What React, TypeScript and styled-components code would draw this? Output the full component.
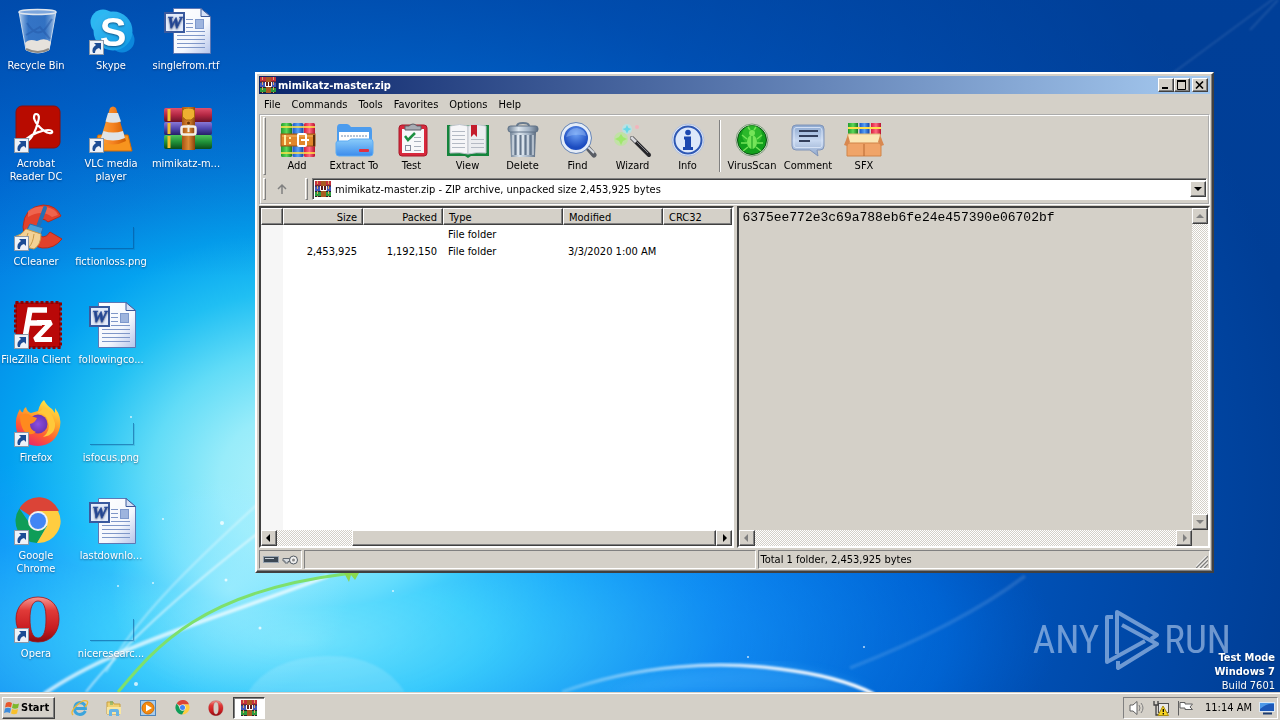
import React from 'react';
import styled, { createGlobalStyle, css } from 'styled-components';

const uiFont = '"DejaVu Sans Condensed", "Noto Sans", sans-serif';
const face = '#d4d0c8';
const shade = '#808080';
const dark = '#404040';

const GlobalStyle = createGlobalStyle`
  * { box-sizing: border-box; }
  body { margin: 0; background: #0050b4; overflow: hidden; }
  body, button, select, textarea, table {
    font-family: ${uiFont};
    font-size: 11px;
    line-height: 13px;
    color: #000;
  }
  button { margin: 0; padding: 0; border: 0; background: none; }
  svg { display: block; flex: none; }
`;

const raised = css`
  background: ${face};
  border: 1px solid;
  border-color: #fff ${dark} ${dark} #fff;
  box-shadow: inset -1px -1px 0 ${shade};
`;

const sunken = css`
  border: 1px solid;
  border-color: ${shade} #fff #fff ${shade};
`;

/* ---------- page ---------- */

const Screen = styled.div`
  display: flex;
  flex-direction: column;
  height: 100vh;
`;

const Desktop = styled.main`
  position: relative;
  flex: 1;
  min-height: 0;
  overflow: hidden;
`;

const WallpaperArt = styled.svg`
  position: absolute;
  inset: 0;
  width: 100%;
  height: 100%;
`;

const LightPool = styled.ellipse`
  mix-blend-mode: lighten;
`;

const IconGrid = styled.div`
  position: relative;
  display: grid;
  grid-auto-flow: column;
  grid-template-rows: repeat(7, 98px);
  grid-auto-columns: 75px;
  justify-content: start;
`;

const DesktopItem = styled.button`
  display: flex;
  flex-direction: column;
  align-items: center;
  gap: 4px;
  padding-top: 7px;
  color: #fff;
  text-shadow: 0 1px 2px rgba(0, 20, 60, 0.55);
`;

const IconSlot = styled.span`
  position: relative;
  display: block;
  width: 48px;
  height: 48px;
`;

const ShortcutMark = styled.svg`
  position: absolute;
  left: 0;
  bottom: 0;
`;

const ItemLabel = styled.span`
  white-space: pre;
  text-align: center;
  padding-right: 3px;
`;

/* ---------- archive window ---------- */

const Window = styled.section`
  position: absolute;
  left: 255px;
  right: 66px;
  top: 72px;
  bottom: 119px;
  display: flex;
  flex-direction: column;
  padding: 2px;
  background: ${face};
  border: 2px solid;
  border-color: #fff ${dark} ${dark} #fff;
  box-shadow: inset -1px -1px 0 ${shade};
`;

const TitleBar = styled.header`
  display: flex;
  align-items: center;
  height: 18px;
  padding: 0 2px 0 1px;
  gap: 2px;
  color: #fff;
  background: linear-gradient(90deg, #0a246a, #a6caf0);
`;

const Title = styled.h1`
  flex: 1;
  margin: 0;
  font-size: 11px;
  line-height: 13px;
  font-weight: bold;
`;

const CaptionGroup = styled.div`
  display: flex;
`;

const CaptionButton = styled.button`
  ${raised}
  display: flex;
  align-items: center;
  justify-content: center;
  width: 16px;
  height: 14px;
`;

const MenuBar = styled.nav`
  display: flex;
  align-items: center;
  gap: 11px;
  height: 20px;
  padding: 0 5px;
`;

const ToolArea = styled.div`
  border: 2px groove #fff;
  padding: 1px 0 1px 2px;
  height: 91px;
  display: flex;
  flex-direction: column;
  gap: 3px;
`;

const Row = styled.div`
  display: flex;
  align-items: center;
`;

const Gripper = styled.span`
  align-self: stretch;
  width: 3px;
  border: 1px solid;
  border-color: #fff ${shade} ${shade} #fff;
`;

const ToolButtons = styled.div`
  display: grid;
  grid-template-columns: 56px 58px 57px repeat(5, 55px) 9px repeat(3, 56px);
  padding-left: 3px;
`;

const ToolButton = styled.button`
  display: flex;
  flex-direction: column;
  align-items: center;
  gap: 1px;
  padding: 5px 0 3px;
  white-space: nowrap;
`;

const ToolSeparator = styled.span`
  justify-self: center;
  width: 2px;
  border-left: 1px solid ${shade};
  border-right: 1px solid #fff;
  margin: 3px 0;
`;

const UpButton = styled.button`
  display: flex;
  align-items: center;
  justify-content: center;
  width: 36px;
  height: 22px;
  padding-right: 4px;
  margin-right: 3px;
`;

const AddressBox = styled.div`
  flex: 1;
  display: flex;
  align-items: center;
  height: 22px;
  margin: 0 1px 0 4px;
  padding-left: 2px;
  gap: 4px;
  background: #fff;
  border: 1px solid;
  border-color: ${shade} #fff #fff ${shade};
  box-shadow: inset 1px 1px 0 ${dark};
`;

const AddressSelect = styled.select`
  flex: 1;
  appearance: none;
  border: 0;
  padding: 1px 0 0;
  background: #fff;
  outline: none;
`;

const Panels = styled.div`
  flex: 1;
  min-height: 0;
  display: grid;
  grid-template-columns: 476fr 473fr;
  gap: 3px;
  padding: 1px 0 2px;
`;

const Panel = styled.div`
  display: flex;
  flex-direction: column;
  min-width: 0;
  border: 2px solid;
  border-color: ${dark} #fff #fff ${dark};
`;

const ListArea = styled.div`
  flex: 1;
  background: linear-gradient(90deg, #f6f6f6 22px, #fff 22px);
`;

const FileTable = styled.table`
  width: 100%;
  table-layout: fixed;
  border-collapse: separate;
  border-spacing: 0;
`;

const Column = styled.col<{ $width?: string }>`
  width: ${(p) => p.$width ?? 'auto'};
`;

const HeadCell = styled.th<{ $right?: boolean }>`
  ${raised}
  height: 17px;
  padding: 1px 5px 0;
  font-weight: normal;
  text-align: ${(p) => (p.$right ? 'right' : 'left')};
`;

const Cell = styled.td<{ $right?: boolean }>`
  height: 17px;
  padding: 3px 6px 1px 5px;
  white-space: nowrap;
  text-align: ${(p) => (p.$right ? 'right' : 'left')};
`;

const CommentBody = styled.div`
  flex: 1;
  display: flex;
  min-height: 0;
`;

const CommentText = styled.textarea`
  flex: 1;
  resize: none;
  border: 0;
  outline: none;
  padding: 1px 3px;
  background: ${face};
  font-family: "Liberation Mono", monospace;
  font-size: 13px;
  line-height: 17px;
  overflow: hidden;
`;

const ScrollTrack = styled.div<{ $vertical?: boolean }>`
  display: flex;
  flex-direction: ${(p) => (p.$vertical ? 'column' : 'row')};
  justify-content: space-between;
  flex: ${(p) => (p.$vertical ? 'none' : '1')};
  width: ${(p) => (p.$vertical ? '16px' : 'auto')};
  background: repeating-conic-gradient(#fff 0 25%, ${face} 0 50%) 0 0 / 2px 2px;
`;

const ScrollRow = styled.div`
  display: flex;
  height: 16px;
`;

const ScrollCorner = styled.span`
  width: 16px;
  background: ${face};
`;

const ScrollButton = styled.button`
  ${raised}
  display: flex;
  align-items: center;
  justify-content: center;
  width: 16px;
  height: 16px;
`;

const ScrollThumb = styled.div`
  ${raised}
  flex: 1;
  margin-left: 16%;
`;

const StatusBar = styled.footer`
  display: grid;
  grid-template-columns: 43px 454fr 453fr;
  gap: 2px;
  height: 19px;
`;

const StatusPane = styled.div`
  ${sunken}
  display: flex;
  align-items: center;
  gap: 2px;
  padding: 0 1px;
`;

const SizeGrip = styled.svg`
  margin-left: auto;
  align-self: end;
`;

/* ---------- watermark ---------- */

const Brand = styled.div`
  position: absolute;
  right: 49px;
  bottom: 20px;
  display: flex;
  align-items: center;
  gap: 4px;
  opacity: 0.6;
  color: #b8d0f0;
  font-family: "Roboto Condensed", "Liberation Sans Narrow", "DejaVu Sans Condensed", sans-serif;
  font-size: 39px;
  line-height: 64px;
  font-weight: 400;
`;

const BuildInfo = styled.div`
  position: absolute;
  right: 5px;
  bottom: 0;
  display: grid;
  gap: 1px;
  color: #fff;
  text-align: right;
  text-shadow: 0 1px 1px rgba(0, 0, 0, 0.4);
`;

const BuildLine = styled.span<{ $bold?: boolean }>`
  font-weight: ${(p) => (p.$bold ? 'bold' : 'normal')};
`;

/* ---------- taskbar ---------- */

const Taskbar = styled.footer`
  display: flex;
  align-items: center;
  height: 28px;
  padding: 2px 2px 0;
  background: ${face};
  border-top: 1px solid ${face};
  box-shadow: inset 0 1px 0 #fff;
`;

const StartButton = styled.button`
  ${raised}
  display: flex;
  align-items: center;
  gap: 1px;
  height: 22px;
  width: 53px;
  padding-left: 1px;
  font-weight: bold;
`;

const QuickLaunch = styled.div`
  display: flex;
  flex: 1;
  padding-left: 8px;
`;

const QuickButton = styled.button<{ $active?: boolean }>`
  display: flex;
  align-items: center;
  justify-content: center;
  width: 34px;
  height: 22px;
  ${(p) =>
    p.$active &&
    css`
      width: 32px;
      background: #fff;
      border: 1px solid;
      border-color: ${dark} #fff #fff ${dark};
      box-shadow: inset 1px 1px 0 ${shade};
    `}
`;

const Tray = styled.div`
  ${sunken}
  display: flex;
  align-items: center;
  gap: 7px;
  height: 22px;
  padding: 0 2px 0 4px;
`;

const Clock = styled.time`
  margin-left: 4px;
  white-space: nowrap;
`;

/* ---------- drawings ---------- */

function Wallpaper() {
  return (
    <WallpaperArt viewBox="0 0 1280 692" preserveAspectRatio="none" aria-hidden="true">
      <defs>
        <radialGradient id="sky" gradientUnits="userSpaceOnUse" cx="0" cy="0" r="1000" gradientTransform="translate(300 480) scale(1 .86)">
          <stop offset="0" stopColor="#b4f3fc" />
          <stop offset=".08" stopColor="#98ecfa" />
          <stop offset=".15" stopColor="#62dcf7" />
          <stop offset=".22" stopColor="#20bff3" />
          <stop offset=".29" stopColor="#04a2f0" />
          <stop offset=".37" stopColor="#0488e6" />
          <stop offset=".47" stopColor="#0070dc" />
          <stop offset=".62" stopColor="#005ac4" />
          <stop offset=".8" stopColor="#004cae" />
          <stop offset="1" stopColor="#003e96" />
        </radialGradient>
        <linearGradient id="topShade" x1="0" y1="0" x2="0" y2="1">
          <stop offset="0" stopColor="#00409a" stopOpacity=".55" />
          <stop offset=".4" stopColor="#00409a" stopOpacity="0" />
        </linearGradient>
        <radialGradient id="glow">
          <stop offset="0" stopColor="#c8f8ff" stopOpacity=".5" />
          <stop offset="1" stopColor="#b0f0ff" stopOpacity="0" />
        </radialGradient>
        <radialGradient id="lowGlow">
          <stop offset="0" stopColor="#80e8ff" stopOpacity=".8" />
          <stop offset=".25" stopColor="#48d4ff" stopOpacity=".75" />
          <stop offset=".55" stopColor="#1c9cff" stopOpacity=".6" />
          <stop offset=".85" stopColor="#0078f0" stopOpacity=".4" />
          <stop offset="1" stopColor="#0068e0" stopOpacity="0" />
        </radialGradient>
        <linearGradient id="arc" x1="0" y1="0" x2="1" y2="0">
          <stop offset="0" stopColor="#fff" stopOpacity=".2" />
          <stop offset=".6" stopColor="#fff" stopOpacity=".8" />
          <stop offset="1" stopColor="#fff" />
        </linearGradient>
        <filter id="soft"><feGaussianBlur stdDeviation="1.2" /></filter>
        <filter id="softer"><feGaussianBlur stdDeviation="6" /></filter>
      </defs>
      <rect width="1280" height="692" fill="url(#sky)" />
      <rect width="1280" height="692" fill="url(#topShade)" />
      <LightPool cx="300" cy="640" rx="760" ry="250" fill="url(#lowGlow)" />
      <ellipse cx="230" cy="590" rx="120" ry="110" fill="url(#glow)" />
      <g fill="none" stroke="#fff" filter="url(#soft)">
        <path d="M44 694C90 662 150 640 200 622Q280 594 328 576" strokeWidth="4" opacity=".7" />
        <path d="M86 692C115 655 165 605 262 530" strokeWidth="2" opacity=".6" />
        <path d="M106 672C135 620 185 570 262 500" strokeWidth="2" opacity=".4" />
        <path d="M1250 30L1278 0M1150 90L1280 -6" strokeWidth="2" opacity=".1" />
        <path d="M850 668Q960 625 1025 576" strokeWidth="4" opacity=".12" />
      </g>
      <path d="M248 692Q270 658 325 656T405 692" fill="#fff" opacity=".14" filter="url(#soft)" />
      <path d="M600 692Q720 655 790 668Q850 680 870 692Z" fill="#4bb8ff" opacity=".35" filter="url(#softer)" />
      <path d="M562 692C640 664 720 661 780 669Q838 676 874 694" fill="none" stroke="url(#arc)" strokeWidth="3.500" filter="url(#soft)" />
      <path d="M118 692C155 648 200 592 345 574" fill="none" stroke="#7ee06c" strokeWidth="3" />
      <path d="M344 573l5 9 2-7 4 5 4-7z" fill="#8ad84e" />
      <g fill="#fff" opacity=".75">
        <circle cx="222" cy="523" r="2" /><circle cx="226" cy="580" r="1.500" /><circle cx="136" cy="684" r="2" />
        <circle cx="163" cy="519" r="1" /><circle cx="118" cy="586" r="1" /><circle cx="260" cy="628" r="1.500" />
        <circle cx="153" cy="583" r="1" /><circle cx="131" cy="417" r="1" /><circle cx="393" cy="591" r="1" />
        <circle cx="864" cy="647" r="1" /><circle cx="748" cy="657" r="1" />
      </g>
    </WallpaperArt>
  );
}

function RecycleBin() {
  return (
    <svg width="48" height="48" viewBox="0 0 48 48">
      <defs>
        <linearGradient id="binGlass" x1="0" x2="1">
          <stop offset="0" stopColor="#dcecfb" stopOpacity=".85" />
          <stop offset=".25" stopColor="#5f93d6" stopOpacity=".55" />
          <stop offset=".7" stopColor="#5b8ed0" stopOpacity=".55" />
          <stop offset="1" stopColor="#cfe2f6" stopOpacity=".85" />
        </linearGradient>
      </defs>
      <path d="M5 5L12 43Q24 49 35 43L42 5Z" fill="url(#binGlass)" stroke="#c5d8ec" strokeWidth="1" />
      <path d="M13 16Q24 34 34 18L38 12M12 28l14-8 10 12" stroke="#2458a8" strokeWidth="2" fill="none" opacity=".5" />
      <path d="M11 36Q15 31 23 34Q31 30 37 35L35 43Q24 48 12 43Z" fill="#e6e2dc" />
      <path d="M12 42Q24 48 35 42" stroke="#8d8a84" fill="none" strokeWidth="2" />
      <ellipse cx="23.500" cy="5" rx="18.500" ry="2.500" fill="#7da6dc" stroke="#dfe6ee" strokeWidth="1.500" />
    </svg>
  );
}

function Skype() {
  return (
    <svg width="48" height="48" viewBox="0 0 48 48">
      <defs>
        <linearGradient id="skypeBlue" x1="0" y1="0" x2="1" y2="1">
          <stop offset="0" stopColor="#38bdf4" /><stop offset="1" stopColor="#129ae4" />
        </linearGradient>
      </defs>
      <circle cx="14" cy="15" r="12.500" fill="#2cb8f2" />
      <circle cx="33" cy="33" r="12.500" fill="#0c88dc" />
      <circle cx="24" cy="24" r="19.500" fill="url(#skypeBlue)" />
      <text x="24" y="39" textAnchor="middle" fontFamily="Liberation Sans" fontWeight="bold" fontSize="40" fill="#fff">S</text>
    </svg>
  );
}

function WordDoc() {
  return (
    <svg width="48" height="48" viewBox="0 0 48 48">
      <defs>
        <linearGradient id="paper" x1="0" y1="0" x2="1" y2="1">
          <stop offset="0" stopColor="#fff" /><stop offset=".6" stopColor="#f4f7fd" /><stop offset="1" stopColor="#b4c4ea" />
        </linearGradient>
      </defs>
      <path d="M9.500 1.500H37L46.500 9.500V46.500H9.500Z" fill="url(#paper)" stroke="#5e78b4" />
      <path d="M37 1.500V9.500H46.500Z" fill="#d5e0f5" stroke="#3d5a9c" />
      <rect x="31.500" y="12.500" width="8" height="9" fill="#9db4de" stroke="#7d98cc" />
      <path d="M22 12.500h7M22 16.500h7M22 20.500h7M22 24.500h19M13 28.500h28M13 32.500h28M13 36.500h28M13 40.500h28" stroke="#7f97c8" />
      <rect x="1" y="6" width="19" height="19" fill="#e3ebfa" stroke="#3a5a9e" strokeWidth="2" />
      <text x="10.500" y="21" textAnchor="middle" fontFamily="Liberation Serif" fontWeight="bold" fontStyle="italic" fontSize="17" fill="#2c4f9e" stroke="#2c4f9e" strokeWidth=".6">W</text>
    </svg>
  );
}

function Acrobat() {
  return (
    <svg width="48" height="48" viewBox="0 0 48 48">
      <rect x="2" y="1" width="44" height="42" rx="6" fill="#b80b00" stroke="#8a0f0c" />
      <path d="M22 9C26 9 25 14 24 17C22 25 18 33 13 37C11 39 8 37 12 34C18 29 28 25 34 25C40 25 39 29 35 28C29 27 21 18 20 13C20 11 20 9 22 9Z" fill="none" stroke="#fff" strokeWidth="2.200" strokeLinejoin="round" />
    </svg>
  );
}

function Vlc() {
  return (
    <svg width="48" height="48" viewBox="0 0 48 48">
      <defs>
        <linearGradient id="cone" x1="0" x2="1">
          <stop offset="0" stopColor="#f9a13a" /><stop offset=".5" stopColor="#f58220" /><stop offset="1" stopColor="#cf5c00" />
        </linearGradient>
      </defs>
      <path d="M9 30H39L43 46H4Z" fill="#f7941e" stroke="#d06a06" />
      <path d="M21 3Q24 0 27 3L37 36Q24 43 11 36Z" fill="url(#cone)" />
      <path d="M19 8H29L32 16.500Q24 19 16.500 16.500Z" fill="#dfe3e6" />
      <path d="M14.500 26Q24 29 34 26L36 33Q24 38 12 33Z" fill="#dfe3e6" />
    </svg>
  );
}

function RarBooks({ size = 48 }: { size?: number }) {
  return (
    <svg width={size} height={size} viewBox="0 0 48 48">
      <defs>
        <linearGradient id="bookRed" x1="0" y1="0" x2="0" y2="1"><stop offset="0" stopColor="#e0506c" /><stop offset=".5" stopColor="#b32743" /><stop offset="1" stopColor="#6a1228" /></linearGradient>
        <linearGradient id="bookBlue" x1="0" y1="0" x2="0" y2="1"><stop offset="0" stopColor="#8a78d6" /><stop offset=".5" stopColor="#5247ae" /><stop offset="1" stopColor="#251f66" /></linearGradient>
        <linearGradient id="bookGreen" x1="0" y1="0" x2="0" y2="1"><stop offset="0" stopColor="#4fc45c" /><stop offset=".5" stopColor="#1f9038" /><stop offset="1" stopColor="#0b4d1a" /></linearGradient>
        <linearGradient id="belt" x1="0" x2="1"><stop offset="0" stopColor="#a85413" /><stop offset=".5" stopColor="#dc8a35" /><stop offset="1" stopColor="#8c420c" /></linearGradient>
      </defs>
      <rect x="0" y="3" width="48" height="14" rx="2" fill="url(#bookRed)" />
      <rect x="0" y="17" width="48" height="13" rx="2" fill="url(#bookBlue)" />
      <rect x="0" y="30" width="48" height="14" rx="2" fill="url(#bookGreen)" />
      <path d="M5 4v12M5 18v11M5 31v12" stroke="#f2c230" strokeWidth="3" />
      <rect x="18" y="2" width="13" height="43" fill="url(#belt)" />
      <path d="M18.500 12V6Q19 3 24.500 3T30.500 6V12L27 15H22Z" fill="#eeb030" stroke="#a8670c" />
      <circle cx="24.500" cy="18" r="1.500" fill="#6a3208" />
      <rect x="17.500" y="21.500" width="14" height="8" rx="2" fill="none" stroke="#f3efe6" strokeWidth="2.500" />
      <path d="M24.500 20v7" stroke="#f3efe6" strokeWidth="2" />
    </svg>
  );
}

function RarSmall() {
  return (
    <svg width="16" height="16" viewBox="0 0 16 16">
      <rect width="16" height="5" fill="#c4303c" /><rect y="5" width="16" height="6" fill="#4256b8" /><rect y="11" width="16" height="5" fill="#2c9a3c" />
      <path d="M0 5h16M0 10.500h16M0 15.500h16" stroke="#26202c" />
      <path d="M2.500 0v16M13.500 0v16" stroke="#e0a860" strokeDasharray="3 2" />
      <rect x="6" width="5" height="16" fill="#a85a22" />
      <rect x="5" y="5" width="7" height="5" fill="#5a1c20" /><path d="M5.500 5v4.500h6V5M8.500 5v4" stroke="#fff" fill="none" />
    </svg>
  );
}

function CCleaner() {
  return (
    <svg width="48" height="48" viewBox="0 0 48 48">
      <path d="M47 13L34 19Q28 13 24 20Q20 32 29 34Q33 34 36 29L48 36Q40 46 28 45Q10 42 9 24Q10 4 29 2Q42 2 47 13Z" fill="#e2412b" stroke="#b52c1c" />
      <path d="M14 8Q22 2 32 4Q42 6 44 12L38 14Q28 6 14 14Z" fill="#f5745c" opacity=".7" />
      <path d="M31 5L24 24" stroke="#2670b4" strokeWidth="4" strokeLinecap="round" />
      <path d="M16 21L29 25L27 31L13 27Z" fill="#4aa0d8" stroke="#2670b4" />
      <path d="M12 26L27 31Q27 42 20 46L4 42Q10 36 0 34Q8 32 12 26Z" fill="#f3d295" stroke="#c99848" />
      <path d="M14 30Q12 38 9 42M20 31Q19 40 15 44" stroke="#c99848" fill="none" />
    </svg>
  );
}

function FileZilla() {
  return (
    <svg width="48" height="48" viewBox="0 0 48 48">
      <rect x="1.500" y="1.500" width="45" height="45" fill="#b50505" stroke="#8e0000" strokeWidth="3" strokeDasharray="3 2" />
      <rect x="3" y="3" width="42" height="42" fill="#b90808" />
      <path d="M11 37L16 9H33M14 22H28" stroke="#fff" strokeWidth="5.500" fill="none" />
      <path d="M23 21.500H37L21 38.500H38" stroke="#fff" strokeWidth="5" fill="none" strokeLinejoin="bevel" />
    </svg>
  );
}

function Firefox() {
  return (
    <svg width="48" height="48" viewBox="0 0 48 48">
      <defs>
        <linearGradient id="fox" x1=".8" y1="0" x2=".3" y2="1">
          <stop offset="0" stopColor="#fff04a" /><stop offset=".4" stopColor="#ffa42a" /><stop offset=".7" stopColor="#ff5a34" /><stop offset="1" stopColor="#e8266a" />
        </linearGradient>
        <radialGradient id="foxGlobe"><stop offset="0" stopColor="#8d4fe0" /><stop offset="1" stopColor="#6a34b4" /></radialGradient>
      </defs>
      <path d="M24 12Q26 4 30 1Q33 7 38 10L41 14V9Q48 18 46 28Q42 46 24 47Q4 46 2 28Q1 18 6 10Q7 14 9 13Q9 10 12 8Q13 13 17 14Z" fill="url(#fox)" />
      <path d="M23 14Q32 14 34 22Q37 32 29 38Q42 36 41 24Q38 12 29 7Q29 12 23 14Z" fill="#ffc83a" />
      <circle cx="24" cy="25" r="9.500" fill="url(#foxGlobe)" />
      <path d="M6 17Q12 12 17 17L23 19Q21 24 16 25Q16 31 22 33Q16 38 10 32Q6 26 6 17Z" fill="#ff8a1e" />
    </svg>
  );
}

function Chrome({ size = 48 }: { size?: number }) {
  return (
    <svg width={size} height={size} viewBox="0 0 48 48">
      <path d="M24 24L5.400 11.500A22 22 0 0 1 45 14H24Z" fill="#db4437" />
      <path d="M24 24H14L5.400 11.500A22 22 0 0 0 23 46L33 29Z" fill="#0f9d58" />
      <path d="M24 24V14H44A22 22 0 0 1 23 46L33 29Z" fill="#ffcd40" />
      <circle cx="24" cy="24" r="10" fill="#f1f1f1" />
      <circle cx="24" cy="24" r="8" fill="#4285f4" />
    </svg>
  );
}

function Opera({ size = 48 }: { size?: number }) {
  return (
    <svg width={size} height={size} viewBox="0 0 48 48">
      <defs>
        <linearGradient id="operaRed" x1="0" y1="0" x2="0" y2="1">
          <stop offset="0" stopColor="#f59a94" /><stop offset=".3" stopColor="#e03a38" /><stop offset=".7" stopColor="#c81c20" /><stop offset="1" stopColor="#8a0b10" />
        </linearGradient>
      </defs>
      <path fillRule="evenodd" d="M24 2C38 2 45 12 45 24S38 47 24 47S2 36 2 24S10 2 24 2ZM24 6C18 6 16 14 16 24S18 43 24 43S32 35 32 24S30 6 24 6Z" fill="url(#operaRed)" stroke="#a01418" strokeWidth=".8" />
    </svg>
  );
}

function BlankImage() {
  return (
    <svg width="48" height="48" viewBox="0 0 48 48">
      <path d="M1 45.500H44.500V24" fill="none" stroke="#0a4f90" opacity=".55" />
      <path d="M2 46.500H45.500V25" fill="none" stroke="#0a4f90" opacity=".15" />
    </svg>
  );
}

function ToolDefs() {
  return (
    <svg width="0" height="0" aria-hidden="true">
      <defs>
        <linearGradient id="vGreen" x1="0" x2="1"><stop offset="0" stopColor="#1f9c2c" /><stop offset=".5" stopColor="#5ed85a" /><stop offset="1" stopColor="#157a20" /></linearGradient>
        <linearGradient id="vBlue" x1="0" x2="1"><stop offset="0" stopColor="#1a56c8" /><stop offset=".5" stopColor="#58a0f4" /><stop offset="1" stopColor="#1444a8" /></linearGradient>
        <linearGradient id="vRed" x1="0" x2="1"><stop offset="0" stopColor="#d81c3c" /><stop offset=".5" stopColor="#ff6a80" /><stop offset="1" stopColor="#b81030" /></linearGradient>
        <linearGradient id="folderBlue" x1="0" y1="0" x2="0" y2="1"><stop offset="0" stopColor="#8accfa" /><stop offset="1" stopColor="#3c8cec" /></linearGradient>
        <linearGradient id="steel" x1="0" x2="1"><stop offset="0" stopColor="#6e8196" /><stop offset=".35" stopColor="#dde6ee" /><stop offset=".7" stopColor="#a4b4c6" /><stop offset="1" stopColor="#5c6c80" /></linearGradient>
        <radialGradient id="lens" cy=".35"><stop offset="0" stopColor="#6ca0f4" /><stop offset="1" stopColor="#1c4cc0" /></radialGradient>
        <linearGradient id="bubble" x1="0" y1="0" x2="0" y2="1"><stop offset="0" stopColor="#8ca8d0" /><stop offset=".5" stopColor="#c8d8f0" /><stop offset="1" stopColor="#90a8cc" /></linearGradient>
      </defs>
    </svg>
  );
}

const ToolIcon = ({ children }: { children: React.ReactNode }) => (
  <svg width="42" height="36" viewBox="0 0 42 36">{children}</svg>
);

const AddIcon = () => (
  <ToolIcon>
    <rect x="5" y="1" width="11" height="34" rx="1.500" fill="url(#vGreen)" />
    <rect x="16.500" y="1" width="11" height="34" rx="1.500" fill="url(#vBlue)" />
    <rect x="28" y="1" width="11" height="34" rx="1.500" fill="url(#vRed)" />
    <path d="M5 5h34M5 31h34" stroke="#ffe14a" strokeWidth="2" opacity=".8" />
    <rect x="5" y="12" width="34" height="12" fill="#e0862a" stroke="#9a5410" />
    <path d="M6 14h33" stroke="#f6b868" />
    <rect x="22" y="12" width="8" height="12" rx="1" fill="none" stroke="#fff" strokeWidth="2" /><path d="M25 18h8" stroke="#fff" strokeWidth="2" />
    <path d="M9 13v10M14 15v2M14 20v2" stroke="#fff0a0" strokeWidth="2" />
    <path d="M38 13v11" stroke="#5c2c08" strokeWidth="2" />
  </ToolIcon>
);

const ExtractIcon = () => (
  <ToolIcon>
    <path d="M4 6Q4 2 7 2H14Q16 2 18 5H37Q39 5 39 9V22H4Z" fill="#4c9cee" />
    <path d="M6 10H36V21H6Z" fill="#fff" /><path d="M8 14h27" stroke="#b8c4d4" strokeWidth="2" strokeDasharray="2 1" />
    <path d="M3 21Q3 19 6 19H15L18 17H37Q40 17 40 20V31Q40 34 37 34H6Q3 34 3 31Z" fill="url(#folderBlue)" stroke="#5cacf4" />
    <rect x="26" y="27" width="10" height="3" rx="1" fill="#e03040" />
  </ToolIcon>
);

const TestIcon = () => (
  <ToolIcon>
    <rect x="8" y="3" width="28" height="31" rx="3" fill="#d8283c" stroke="#a81828" />
    <rect x="11" y="7" width="22" height="24" fill="#f7f8fa" />
    <path d="M14 8V4H18Q22 0 26 4H30V8Z" fill="#a8acb4" stroke="#5c6068" />
    <path d="M14 14l3 4 7-7" stroke="#1c9040" strokeWidth="2.500" fill="none" />
    <path d="M23 15.500h7M23 19.500h7M23 24.500h7M23 28.500h7" stroke="#a8b0bc" /><rect x="14.500" y="23.500" width="5" height="5" fill="none" stroke="#8890a0" />
  </ToolIcon>
);

const ViewIcon = () => (
  <ToolIcon>
    <path d="M0 3H42V34H24L21 36L18 34H0Z" fill="#14843c" />
    <path d="M3 4Q13 1 21 4V32Q13 30 3 31Z" fill="#f6f6f8" stroke="#c0c4cc" /><path d="M39 4Q29 1 21 4V32Q29 30 39 31Z" fill="#ebedf0" stroke="#c0c4cc" />
    <path d="M5 9.500h13M5 13.500h13M5 17.500h13M5 21.500h13M5 25.500h13M24 17.500h13M24 21.500h13M24 25.500h13" stroke="#b4bac4" />
    <path d="M24 3H30V15L27 12L24 15Z" fill="#c41c2c" />
  </ToolIcon>
);

const DeleteIcon = () => (
  <ToolIcon>
    <path d="M15 4Q15 1 21 1T27 4" fill="none" stroke="#687a8e" strokeWidth="2" />
    <path d="M8 9H34L33 35H9Z" fill="url(#steel)" />
    <path d="M13.500 13V33M18.500 13V33M23.500 13V33M28.500 13V33" stroke="#64768c" strokeWidth="2" /><path d="M16 13v20M21 13v20M26 13v20M31 13v20M11 13v20" stroke="#eef4fa" />
    <rect x="6" y="4" width="30" height="6" rx="2.500" fill="url(#steel)" stroke="#5e7186" />
  </ToolIcon>
);

const FindIcon = () => (
  <ToolIcon>
    <path d="M30 25L37 33" stroke="#585c64" strokeWidth="5" strokeLinecap="round" /><path d="M30 24L37 31" stroke="#d8dce2" strokeWidth="2" />
    <circle cx="19" cy="16" r="13.500" fill="url(#lens)" stroke="#e4ecf8" strokeWidth="3" />
    <circle cx="19" cy="16" r="15.500" fill="none" stroke="#6888bc" />
    <path d="M9 15Q12 6 20 6Q28 7 29 14Q20 11 9 15Z" fill="#b4d4ff" opacity=".35" />
  </ToolIcon>
);

const WizardIcon = () => (
  <ToolIcon>
    <path d="M20 16L37 33" stroke="#26262a" strokeWidth="4" strokeLinecap="round" /><path d="M19 15L24 20" stroke="#d8d8dc" strokeWidth="3" /><path d="M25 20L36 31" stroke="#84848a" />
    <circle cx="9" cy="17" r="7" fill="#b4ec90" opacity=".6" /><path d="M9 12l2 3 4 2-4 2-2 4-2-4-4-2 4-2z" fill="#a0e86c" />
    <circle cx="15" cy="7" r="5" fill="#a8ecf4" opacity=".6" /><path d="M15 3l1.500 3 3 1-3 1.500-1.500 3-1.500-3-3-1.500 3-1z" fill="#68d8e8" />
    <circle cx="25" cy="5" r="2" fill="#f2b4bc" />
  </ToolIcon>
);

const InfoIcon = () => (
  <ToolIcon>
    <circle cx="21" cy="18" r="16" fill="#e2eaf8" stroke="#b0c0e0" /><circle cx="21" cy="18" r="13.500" fill="#dde8fa" stroke="#2e58b4" strokeWidth="2" />
    <circle cx="21" cy="10.500" r="2.800" fill="#1c48b0" /><path d="M17 14.500H24V25H26V28H16V25H18V17.500H17Z" fill="#1c48b0" />
  </ToolIcon>
);

const VirusIcon = () => (
  <ToolIcon>
    <circle cx="21" cy="18" r="16" fill="#e4f0e0" stroke="#7a9878" /><circle cx="21" cy="18" r="14.500" fill="#12a01c" stroke="#0a4c12" />
    <circle cx="21" cy="13" r="10" fill="#3cc834" opacity=".6" />
    <ellipse cx="21" cy="20" rx="5" ry="7" fill="#74e458" /><circle cx="21" cy="11" r="3" fill="#74e458" />
    <path d="M16 17L11 13M26 17L31 13M16 21H10M26 21H32M17 25L12 29M25 25L30 29M19 8L17 5M23 8L25 5" stroke="#74e458" strokeWidth="1.500" />
    <path d="M21 14V27" stroke="#129a1c" />
  </ToolIcon>
);

const CommentIcon = () => (
  <ToolIcon>
    <path d="M9 3H33Q37 3 37 7V24Q37 28 33 28H30L31 34L23 28H9Q5 28 5 24V7Q5 3 9 3Z" fill="url(#bubble)" stroke="#8094b8" />
    <path d="M9 5.500H33Q35 6 35 9V23Q35 25.500 33 25.500H9Q7 25 7 23V8Q7 6 9 5.500Z" fill="none" stroke="#e0eafa" opacity=".8" />
    <path d="M12 9h19M12 14h19M12 19h11" stroke="#34405c" strokeWidth="2" />
  </ToolIcon>
);

const SfxIcon = () => (
  <ToolIcon>
    <rect x="5" y="1" width="10" height="13" fill="url(#vGreen)" /><rect x="16.500" y="1" width="10" height="13" fill="url(#vBlue)" /><rect x="28" y="1" width="10" height="13" fill="url(#vRed)" />
    <path d="M5 6h33" stroke="#ffe14a" strokeWidth="2" />
    <path d="M5 12H37L39 22H3Z" fill="#fbe6b4" stroke="#e0b878" />
    <path d="M4 21H38V34H4Z" fill="#f0a468" stroke="#d08448" /><path d="M21 22V34" stroke="#b86830" />
    <path d="M5 13L1 23L4 24L7 20ZM37 13L41 23L38 24L35 20Z" fill="#d88850" />
  </ToolIcon>
);

const Arrow = ({ dir, dim }: { dir: 'left' | 'right' | 'up' | 'down'; dim?: boolean }) => {
  const shapes = { left: 'M6 1V9L2 5Z', right: 'M4 1V9L8 5Z', up: 'M1 7H9L5 3Z', down: 'M1 3H9L5 7Z' };
  return (
    <svg width="10" height="10" viewBox="0 0 10 10"><path d={shapes[dir]} fill={dim ? shade : '#000'} /></svg>
  );
};

/* ---------- data ---------- */

const desktopItems: { label: string; icon: React.ReactNode; shortcut?: boolean }[] = [
  { label: 'Recycle Bin', icon: <RecycleBin /> },
  { label: 'Acrobat\nReader DC', icon: <Acrobat />, shortcut: true },
  { label: 'CCleaner', icon: <CCleaner />, shortcut: true },
  { label: 'FileZilla Client', icon: <FileZilla />, shortcut: true },
  { label: 'Firefox', icon: <Firefox />, shortcut: true },
  { label: 'Google\nChrome', icon: <Chrome />, shortcut: true },
  { label: 'Opera', icon: <Opera />, shortcut: true },
  { label: 'Skype', icon: <Skype />, shortcut: true },
  { label: 'VLC media\nplayer', icon: <Vlc />, shortcut: true },
  { label: 'fictionloss.png', icon: <BlankImage /> },
  { label: 'followingco...', icon: <WordDoc /> },
  { label: 'isfocus.png', icon: <BlankImage /> },
  { label: 'lastdownlo...', icon: <WordDoc /> },
  { label: 'niceresearc...', icon: <BlankImage /> },
  { label: 'singlefrom.rtf', icon: <WordDoc /> },
  { label: 'mimikatz-m...', icon: <RarBooks /> },
];

const tools: { label: string; icon: React.ReactNode }[] = [
  { label: 'Add', icon: <AddIcon /> },
  { label: 'Extract To', icon: <ExtractIcon /> },
  { label: 'Test', icon: <TestIcon /> },
  { label: 'View', icon: <ViewIcon /> },
  { label: 'Delete', icon: <DeleteIcon /> },
  { label: 'Find', icon: <FindIcon /> },
  { label: 'Wizard', icon: <WizardIcon /> },
  { label: 'Info', icon: <InfoIcon /> },
];

const extraTools = [
  { label: 'VirusScan', icon: <VirusIcon /> },
  { label: 'Comment', icon: <CommentIcon /> },
  { label: 'SFX', icon: <SfxIcon /> },
];

const columnWidths = ['22px', '80px', '80px', '120px', '100px', undefined];

const files = [
  { size: '', packed: '', type: 'File folder', modified: '' },
  { size: '2,453,925', packed: '1,192,150', type: 'File folder', modified: '3/3/2020 1:00 AM' },
];

/* ---------- sections ---------- */

function ArchiveWindow() {
  return (
    <Window aria-label="mimikatz-master.zip">
      <TitleBar>
        <RarSmall />
        <Title>mimikatz-master.zip</Title>
        <CaptionGroup>
          <CaptionButton aria-label="Minimize"><svg width="10" height="10"><path d="M1 8h6" stroke="#000" strokeWidth="2" /></svg></CaptionButton>
          <CaptionButton aria-label="Maximize"><svg width="10" height="10"><path d="M.5 1v8.500h8V1M0 1h9" stroke="#000" fill="none" /><path d="M0 1h9" stroke="#000" strokeWidth="2" /></svg></CaptionButton>
        </CaptionGroup>
        <CaptionButton aria-label="Close"><svg width="10" height="8"><path d="M1 .5l7 7M8 .5l-7 7" stroke="#000" strokeWidth="1.600" /></svg></CaptionButton>
      </TitleBar>
      <MenuBar>
        {['File', 'Commands', 'Tools', 'Favorites', 'Options', 'Help'].map((m) => <button key={m}>{m}</button>)}
      </MenuBar>
      <ToolArea>
        <Row>
          <Gripper />
          <ToolButtons>
            {tools.map((t) => <ToolButton key={t.label}>{t.icon}{t.label}</ToolButton>)}
            <ToolSeparator />
            {extraTools.map((t) => <ToolButton key={t.label}>{t.icon}{t.label}</ToolButton>)}
          </ToolButtons>
        </Row>
        <Row>
          <Gripper />
          <UpButton aria-label="Up one level"><svg width="12" height="12"><path d="M6 11V2M2 6l4-4 4 4" stroke="#808080" strokeWidth="1.500" fill="none" /></svg></UpButton>
          <Gripper />
          <AddressBox>
            <RarSmall />
            <AddressSelect aria-label="Archive path">
              <option>mimikatz-master.zip - ZIP archive, unpacked size 2,453,925 bytes</option>
            </AddressSelect>
            <ScrollButton aria-label="Show paths"><Arrow dir="down" /></ScrollButton>
          </AddressBox>
        </Row>
      </ToolArea>
      <Panels>
        <Panel>
          <ListArea>
            <FileTable>
              <colgroup>
                {columnWidths.map((w, i) => <Column key={i} $width={w} />)}
              </colgroup>
              <thead>
                <tr>
                  <HeadCell aria-label="Name" />
                  <HeadCell $right>Size</HeadCell>
                  <HeadCell $right>Packed</HeadCell>
                  <HeadCell>Type</HeadCell>
                  <HeadCell>Modified</HeadCell>
                  <HeadCell>CRC32</HeadCell>
                </tr>
              </thead>
              <tbody>
                {files.map((f, i) => (
                  <tr key={i}>
                    <Cell />
                    <Cell $right>{f.size}</Cell>
                    <Cell $right>{f.packed}</Cell>
                    <Cell>{f.type}</Cell>
                    <Cell>{f.modified}</Cell>
                    <Cell />
                  </tr>
                ))}
              </tbody>
            </FileTable>
          </ListArea>
          <ScrollRow>
            <ScrollTrack>
              <ScrollButton aria-label="Scroll left"><Arrow dir="left" /></ScrollButton>
              <ScrollThumb />
              <ScrollButton aria-label="Scroll right"><Arrow dir="right" /></ScrollButton>
            </ScrollTrack>
          </ScrollRow>
        </Panel>
        <Panel>
          <CommentBody>
            <CommentText readOnly aria-label="Archive comment" defaultValue="6375ee772e3c69a788eb6fe24e457390e06702bf" />
            <ScrollTrack $vertical>
              <ScrollButton aria-label="Scroll up"><Arrow dir="up" dim /></ScrollButton>
              <ScrollButton aria-label="Scroll down"><Arrow dir="down" dim /></ScrollButton>
            </ScrollTrack>
          </CommentBody>
          <ScrollRow>
            <ScrollTrack>
              <ScrollButton aria-label="Scroll left"><Arrow dir="left" dim /></ScrollButton>
              <ScrollButton aria-label="Scroll right"><Arrow dir="right" dim /></ScrollButton>
            </ScrollTrack>
            <ScrollCorner />
          </ScrollRow>
        </Panel>
      </Panels>
      <StatusBar>
        <StatusPane>
          <svg width="19" height="10" viewBox="0 0 19 10"><rect x="2.500" y="1.500" width="15" height="6" fill="#3c4854" stroke="#98a4b0" /><path d="M4 3.500h9" stroke="#c8d0d8" /></svg>
          <svg width="17" height="12" viewBox="0 0 17 12"><path d="M1 4.500h8v3H6V9H3V7H1Z" fill="#d8dce0" stroke="#606870" /><circle cx="11.500" cy="6" r="4" fill="#f0f0f0" stroke="#505860" /><circle cx="11.500" cy="6" r="1.500" fill="#888" /></svg>
        </StatusPane>
        <StatusPane />
        <StatusPane>
          Total 1 folder, 2,453,925 bytes
          <SizeGrip width="12" height="12" viewBox="0 0 12 12"><path d="M0 12L12 0M4 12L12 4M8 12L12 8" stroke="#808080" strokeWidth="1.500" /><path d="M-1.500 12L12 -1.500M2.500 12L12 2.500M6.500 12L12 6.500" stroke="#fff" /></SizeGrip>
        </StatusPane>
      </StatusBar>
    </Window>
  );
}

function BottomBar() {
  return (
    <Taskbar>
      <StartButton>
        <svg width="16" height="16" viewBox="0 0 16 16">
          <path d="M2 3Q5 1 8 3L7 7.500Q4 6 1 7.500Z" fill="#e8582c" /><path d="M9 3.500Q12 5 15 3.500L14 8Q11 9.500 8 8Z" fill="#7cb82c" />
          <path d="M1 8.500Q4 7 7 8.500L6 13Q3 11.500 0 13Z" fill="#3c8cdc" /><path d="M8 9Q11 10.500 14 9L13 13.500Q10 15 7 13.500Z" fill="#f8c02c" />
        </svg>
        Start
      </StartButton>
      <QuickLaunch>
        <QuickButton aria-label="Internet Explorer">
          <svg width="18" height="18" viewBox="0 0 18 18"><path d="M14.500 12Q12.500 15.500 9 15.500Q3.500 15 3.500 9.500Q4 4 9 3.500Q14.500 4 14.500 9.500H5" fill="none" stroke="#3ca4dc" strokeWidth="2.800" /><path d="M2 16Q-1 13 5 7Q12 0 16 2Q18 4 14 8" fill="none" stroke="#f0b830" strokeWidth="1.300" /></svg>
        </QuickButton>
        <QuickButton aria-label="File Explorer">
          <svg width="18" height="18" viewBox="0 0 18 18"><path d="M2 3H8L9 5H15V15H2Z" fill="#f0d070" stroke="#c8a040" /><path d="M2 8H16V15H2Z" fill="#f9e6a0" /><path d="M4 17V12Q4 10 6 10H12Q14 10 14 12V17H11V13H7V17Z" fill="#68b4e4" /><path d="M5 3h3M5 5h3" stroke="#58a860" /></svg>
        </QuickButton>
        <QuickButton aria-label="Media Player">
          <svg width="16" height="16" viewBox="0 0 16 16"><rect x=".5" y=".5" width="15" height="15" fill="#a8ccec" stroke="#4c84bc" /><circle cx="8" cy="8" r="6" fill="#f48a10" stroke="#d06c04" /><path d="M6 4.500V11.500L12 8Z" fill="#fff" /></svg>
        </QuickButton>
        <QuickButton aria-label="Google Chrome"><Chrome size={15} /></QuickButton>
        <QuickButton aria-label="Opera"><Opera size={16} /></QuickButton>
        <QuickButton $active aria-label="WinRAR"><RarSmall /></QuickButton>
      </QuickLaunch>
      <Tray>
        <svg width="18" height="16" viewBox="0 0 18 16"><path d="M2 5H5L9 1.500V14.500L5 11H2Z" fill="#fff" stroke="#606060" /><path d="M11 5Q13 8 11 11M13 3Q17 8 13 13" fill="none" stroke="#808080" /></svg>
        <svg width="17" height="16" viewBox="0 0 17 16"><rect x="5.500" y="3.500" width="10" height="9" fill="#e8e8e8" stroke="#505050" /><path d="M1 1V5H5V1M3 5V15H8" fill="none" stroke="#404040" strokeWidth="1.300" /><path d="M10 6L15.500 15.500H5Z" fill="#f8d420" stroke="#a88c10" /><path d="M10.300 9v3M10.300 13v1.500" stroke="#000" strokeWidth="1.300" /></svg>
        <svg width="17" height="16" viewBox="0 0 17 16"><path d="M1.500 1V15.500M3 2.500H8V4H15.500L13 7L15.500 9.500H8V8H3Z" fill="#fff" stroke="#606060" /></svg>
        <Clock>11:14 AM</Clock>
        <svg width="16" height="14" viewBox="0 0 16 14"><rect x=".5" y="1.500" width="15" height="9" fill="#1c58b8" stroke="#dce8f4" /><path d="M1 8Q8 2 15 3V2H1Z" fill="#4c98e8" /><path d="M4 12.500h9" stroke="#1c3c70" strokeWidth="2" /></svg>
      </Tray>
    </Taskbar>
  );
}

export default function App() {
  return (
    <Screen>
      <GlobalStyle />
      <Desktop>
        <Wallpaper />
        <IconGrid>
          {desktopItems.map((item) => (
            <DesktopItem key={item.label}>
              <IconSlot>
                {item.icon}
                {item.shortcut && (
                  <ShortcutMark width="15" height="15" viewBox="0 0 15 15">
                    <rect x=".5" y=".5" width="14" height="14" fill="#eef2f8" stroke="#8c98a8" />
                    <path d="M4 13Q2 8 7 5L5 3H12V10L10 8Q6 9 6 13Z" fill="#1c4c94" />
                  </ShortcutMark>
                )}
              </IconSlot>
              <ItemLabel>{item.label}</ItemLabel>
            </DesktopItem>
          ))}
        </IconGrid>
        <Brand>
          ANY
          <svg width="57" height="64" viewBox="0 0 57 64" fill="none" stroke="#b8d0f0" strokeWidth="4" strokeLinejoin="round">
            <path d="M10 9H4V54L42 33" />
            <path d="M14 46V4L54 27L48 31" />
            <path d="M19 17L54 36L15 60V53" />
          </svg>
          RUN
        </Brand>
        <BuildInfo>
          <BuildLine $bold>Test Mode</BuildLine>
          <BuildLine $bold>Windows 7</BuildLine>
          <BuildLine>Build 7601</BuildLine>
        </BuildInfo>
        <ArchiveWindow />
      </Desktop>
      <ToolDefs />
      <BottomBar />
    </Screen>
  );
}
